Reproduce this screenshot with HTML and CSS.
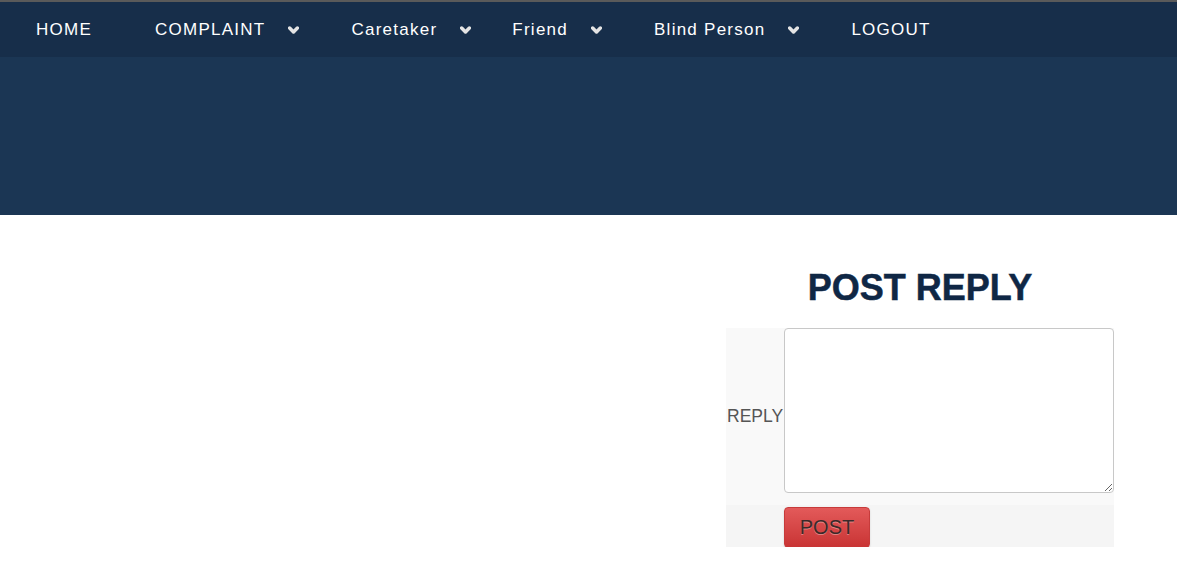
FILE: index.html
```html
<!DOCTYPE html>
<html>
<head>
<meta charset="utf-8">
<link rel="stylesheet" href="styles.css">
</head>
<body>
<header class="topbar">
  <nav class="nav">
    <ul class="menu">
      <li class="item item-home"><a href="#">HOME</a></li>
      <li class="item"><a href="#">COMPLAINT</a><svg class="chev" viewBox="0 0 10 8"><path d="M1.5 1.8 L5 5.3 L8.5 1.8" /></svg></li>
      <li class="item item-care"><a href="#">Caretaker</a><svg class="chev" viewBox="0 0 10 8"><path d="M1.5 1.8 L5 5.3 L8.5 1.8" /></svg></li>
      <li class="item"><a href="#">Friend</a><svg class="chev" viewBox="0 0 10 8"><path d="M1.5 1.8 L5 5.3 L8.5 1.8" /></svg></li>
      <li class="item"><a href="#">Blind Person</a><svg class="chev" viewBox="0 0 10 8"><path d="M1.5 1.8 L5 5.3 L8.5 1.8" /></svg></li>
      <li class="item"><a href="#">LOGOUT</a></li>
    </ul>
  </nav>
  <div class="banner"></div>
</header>
<main class="main">
  <section class="reply">
    <h1 class="title">POST REPLY</h1>
    <form class="form">
      <div class="row row-text">
        <label class="label">REPLY</label>
        <div class="field"><textarea class="textarea"></textarea></div>
      </div>
      <div class="row row-btn">
        <div class="label"></div>
        <div class="field"><button type="button" class="btn">POST</button></div>
      </div>
    </form>
  </section>
</main>
</body>
</html>
```
FILE: styles.css
```css
html, body {
  margin: 0;
  padding: 0;
  background: #ffffff;
  font-family: "Liberation Sans", Arial, sans-serif;
}
.topbar {
  border-top: 2px solid #5a5a5a;
}
.nav {
  background: #172e4a;
  height: 55px;
}
.menu {
  list-style: none;
  margin: 0;
  padding: 0 0 0 36px;
  display: flex;
  align-items: center;
  height: 55px;
}
.item {
  display: flex;
  align-items: center;
  margin-right: 52px;
}
.item-home { margin-right: 63px; }
.item-care { margin-right: 41px; }
.item a {
  color: #ffffff;
  text-decoration: none;
  font-size: 17px;
  letter-spacing: 1.25px;
}
.chev {
  width: 11px;
  height: 9px;
  margin-left: 23px;
  margin-top: 1px;
}
.chev path {
  fill: none;
  stroke: #e4e4e4;
  stroke-width: 3.2;
  stroke-linecap: round;
  stroke-linejoin: round;
}
.banner {
  background: #1b3654;
  height: 158px;
}
.main {
  display: flex;
  justify-content: flex-end;
  padding-right: 63px;
}
.reply {
  width: 388px;
}
.title {
  margin: 52px 0 20px;
  text-align: center;
  font-size: 36px;
  font-weight: bold;
  color: #0f2745;
  line-height: 41px;
  -webkit-text-stroke: 0.5px #0f2745;
}
.form {
  display: flex;
  flex-direction: column;
}
.row {
  display: flex;
}
.row-text {
  background: #f9f9f9;
  height: 177px;
}
.row-btn {
  background: #f5f5f5;
  height: 42px;
}
.label {
  width: 58px;
  flex: none;
  display: flex;
  align-items: center;
  font-size: 17.5px;
  color: #555555;
  padding-left: 1px;
  box-sizing: border-box;
}
.field {
  flex: 1;
}
.textarea {
  display: block;
  box-sizing: border-box;
  width: 330px;
  height: 165px;
  margin: 0;
  border: 1px solid #c8c8c8;
  border-radius: 4px;
  background: #fff;
}
.btn {
  margin-top: 2px;
  width: 86px;
  height: 41px;
  border: 1px solid #c73b3b;
  border-radius: 4px;
  background: linear-gradient(#e35a5a, #c93434);
  color: #3a2a2a;
  font-family: "Liberation Sans", Arial, sans-serif;
  font-size: 20px;
  text-shadow: 0 1px 0 rgba(255,255,255,0.35);
  box-shadow: 0 1px 2px rgba(0,0,0,0.15);
  padding: 0;
}
```
